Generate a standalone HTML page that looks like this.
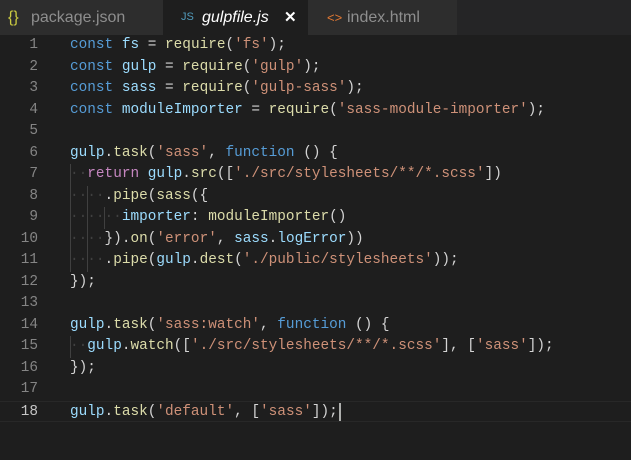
<!DOCTYPE html>
<html><head><meta charset="utf-8"><style>
body{margin:0;width:631px;height:460px;background:#1e1e1e;overflow:hidden;position:relative;font-family:"Liberation Mono",monospace}
.tabs{position:absolute;left:0;top:0;width:631px;height:35px;background:#252526}
.tab{position:absolute;top:0;height:35px;background:#2d2d2d;font-family:"Liberation Sans",sans-serif;font-size:16px;color:#8e8e8e;line-height:35px;white-space:nowrap}
.tab.act{background:#1e1e1e;color:#fff;font-style:italic}
.code{position:absolute;left:0;top:35px;width:631px}
.l{position:relative;height:21.5px;line-height:21.5px;font-size:14.4px;white-space:pre;color:#d4d4d4}
.n{position:absolute;left:0;width:38px;text-align:right;color:#858585}
.t{position:absolute;left:70px}
.k{color:#569cd6}.v{color:#9cdcfe}.f{color:#dcdcaa}.s{color:#ce9178}.p{color:#c586c0}.w{color:#404040}
.g{position:absolute;top:0;width:1px;height:21.5px;background:#404040}
.cur{border-top:1px solid #282828;border-bottom:1px solid #282828;box-sizing:border-box}
</style></head><body>
<div class="tabs">
<div class="tab" style="left:0;width:163px"><span style="color:#cbcb41;position:absolute;left:8px">{}</span><span style="position:absolute;left:31px">package.json</span></div>
<div class="tab act" style="left:163px;width:145px"><span style="color:#519aba;font-style:normal;font-size:11px;position:absolute;left:18px">JS</span><span style="position:absolute;left:39px">gulpfile.js</span><span style="position:absolute;left:121px;font-style:normal;font-weight:bold;font-size:15px">✕</span></div>
<div class="tab" style="left:308px;width:149px"><span style="color:#e37933;position:absolute;left:19px;font-size:13px">&lt;&gt;</span><span style="position:absolute;left:39px">index.html</span></div>
</div>
<div class="code">
<div class="l"><span class="n">1</span><span class="t"><span class="k">const</span> <span class="v">fs</span> = <span class="f">require</span>(<span class="s">'fs'</span>);</span></div>
<div class="l"><span class="n">2</span><span class="t"><span class="k">const</span> <span class="v">gulp</span> = <span class="f">require</span>(<span class="s">'gulp'</span>);</span></div>
<div class="l"><span class="n">3</span><span class="t"><span class="k">const</span> <span class="v">sass</span> = <span class="f">require</span>(<span class="s">'gulp-sass'</span>);</span></div>
<div class="l"><span class="n">4</span><span class="t"><span class="k">const</span> <span class="v">moduleImporter</span> = <span class="f">require</span>(<span class="s">'sass-module-importer'</span>);</span></div>
<div class="l"><span class="n">5</span></div>
<div class="l"><span class="n">6</span><span class="t"><span class="v">gulp</span>.<span class="f">task</span>(<span class="s">'sass'</span>, <span class="k">function</span> () {</span></div>
<div class="l"><span class="n">7</span><span class="g" style="left:70px"></span><span class="t"><span class="w">··</span><span class="p">return</span> <span class="v">gulp</span>.<span class="f">src</span>([<span class="s">'./src/stylesheets/**/*.scss'</span>])</span></div>
<div class="l"><span class="n">8</span><span class="g" style="left:70px"></span><span class="g" style="left:87px"></span><span class="t"><span class="w">····</span>.<span class="f">pipe</span>(<span class="f">sass</span>({</span></div>
<div class="l"><span class="n">9</span><span class="g" style="left:70px"></span><span class="g" style="left:87px"></span><span class="g" style="left:104px"></span><span class="t"><span class="w">······</span><span class="v">importer</span>: <span class="f">moduleImporter</span>()</span></div>
<div class="l"><span class="n">10</span><span class="g" style="left:70px"></span><span class="g" style="left:87px"></span><span class="t"><span class="w">····</span>}).<span class="f">on</span>(<span class="s">'error'</span>, <span class="v">sass</span>.<span class="v">logError</span>))</span></div>
<div class="l"><span class="n">11</span><span class="g" style="left:70px"></span><span class="g" style="left:87px"></span><span class="t"><span class="w">····</span>.<span class="f">pipe</span>(<span class="v">gulp</span>.<span class="f">dest</span>(<span class="s">'./public/stylesheets'</span>));</span></div>
<div class="l"><span class="n">12</span><span class="t">});</span></div>
<div class="l"><span class="n">13</span></div>
<div class="l"><span class="n">14</span><span class="t"><span class="v">gulp</span>.<span class="f">task</span>(<span class="s">'sass:watch'</span>, <span class="k">function</span> () {</span></div>
<div class="l"><span class="n">15</span><span class="g" style="left:70px"></span><span class="t"><span class="w">··</span><span class="v">gulp</span>.<span class="f">watch</span>([<span class="s">'./src/stylesheets/**/*.scss'</span>], [<span class="s">'sass'</span>]);</span></div>
<div class="l"><span class="n">16</span><span class="t">});</span></div>
<div class="l"><span class="n">17</span></div>
<div class="l cur"><span class="n" style="color:#c6c6c6">18</span><span class="t"><span class="v">gulp</span>.<span class="f">task</span>(<span class="s">'default'</span>, [<span class="s">'sass'</span>]);</span><span style="position:absolute;left:339px;top:1px;width:2px;height:18px;background:#aeafad"></span></div>
</div>
</body></html>
